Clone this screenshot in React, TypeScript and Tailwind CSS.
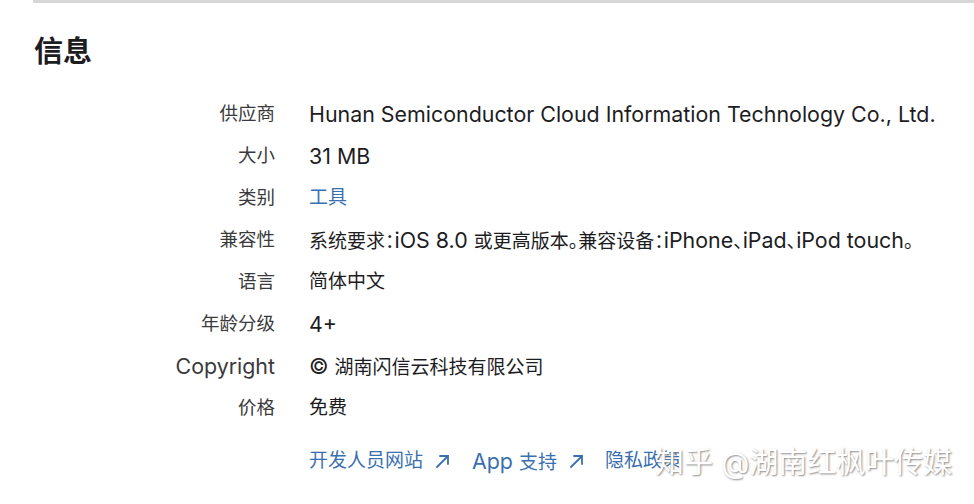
import React from 'react';

const CJK = /([\u3000-\u303f\u4e00-\u9fff\uff00-\uffef]+)/;

// Latin runs are set a bit larger than the CJK runs, as in the screenshot
function Mixed({ text, big }: { text: string; big?: boolean }) {
  const parts = text.split(CJK).filter(Boolean);
  return (
    <span>
      {parts.map((p, i) =>
        CJK.test(p) ? (
          <span key={i} className={`${big ? 'text-[19px]' : 'text-[18.5px]'} [font-feature-settings:'halt']`}>{p}</span>
        ) : (
          <span key={i} className="text-[21.4px]">{p}</span>
        )
      )}
    </span>
  );
}

const rows: { label: string; value: string; link?: boolean }[] = [
  { label: '供应商', value: 'Hunan Semiconductor Cloud Information Technology Co., Ltd.' },
  { label: '大小', value: '31 MB' },
  { label: '类别', value: '工具', link: true },
  { label: '兼容性', value: '系统要求：iOS 8.0 或更高版本。兼容设备：iPhone、iPad、iPod touch。' },
  { label: '语言', value: '简体中文' },
  { label: '年龄分级', value: '4+' },
  { label: 'Copyright', value: '© 湖南闪信云科技有限公司' },
  { label: '价格', value: '免费' }
];

function Arrow() {
  return (
    <svg width="15" height="15" viewBox="0 0 15 15" className="ml-[12px] inline-block" fill="none" stroke="currentColor" strokeWidth="1.8" strokeLinecap="round">
      <path d="M2 13 L13 2" />
      <path d="M5 2 H13 V10" />
    </svg>
  );
}

export default function App() {
  return (
    <div
      className="relative h-[504px] w-[974px] overflow-hidden bg-white text-[#1d1d1f]"
      style={{ fontFamily: 'Inter, "Noto Sans CJK SC", sans-serif' }}
    >
      <div className="ml-[33px] h-[3px] bg-[#d6d6d6]" />
      <h2 className="ml-[34px] mt-[32px] text-[29px] font-bold leading-[34px]">信息</h2>

      <dl className="mt-[24px] grid grid-cols-[241px_1fr] gap-x-[34px] pl-[34px]">
        {rows.map((r) => (
          <React.Fragment key={r.label}>
            <dt className="flex h-[42px] items-center justify-end text-[#3a3a3c]">
              <Mixed text={r.label} />
            </dt>
            <dd className={`flex h-[42px] items-center whitespace-nowrap ${r.link ? 'text-[#3a6fb0]' : ''}`}>
              <Mixed text={r.value} big />
            </dd>
          </React.Fragment>
        ))}
      </dl>

      <div className="mt-[16px] flex items-center pl-[309px] text-[#3a6fb0]">
        <a className="flex items-center"><Mixed text="开发人员网站" big /><Arrow /></a>
        <a className="ml-[22px] flex items-center"><Mixed text="App 支持" big /><Arrow /></a>
        <a className="ml-[21px] flex items-center"><Mixed text="隐私政策" big /></a>
      </div>

      <div
        className="absolute left-[655px] top-[445px] text-[29px] leading-[36px] text-white"
        style={{ textShadow: '1px 1px 2px #8a8a8a' }}
      >
        知乎 @湖南红枫叶传媒
      </div>
    </div>
  );
}
